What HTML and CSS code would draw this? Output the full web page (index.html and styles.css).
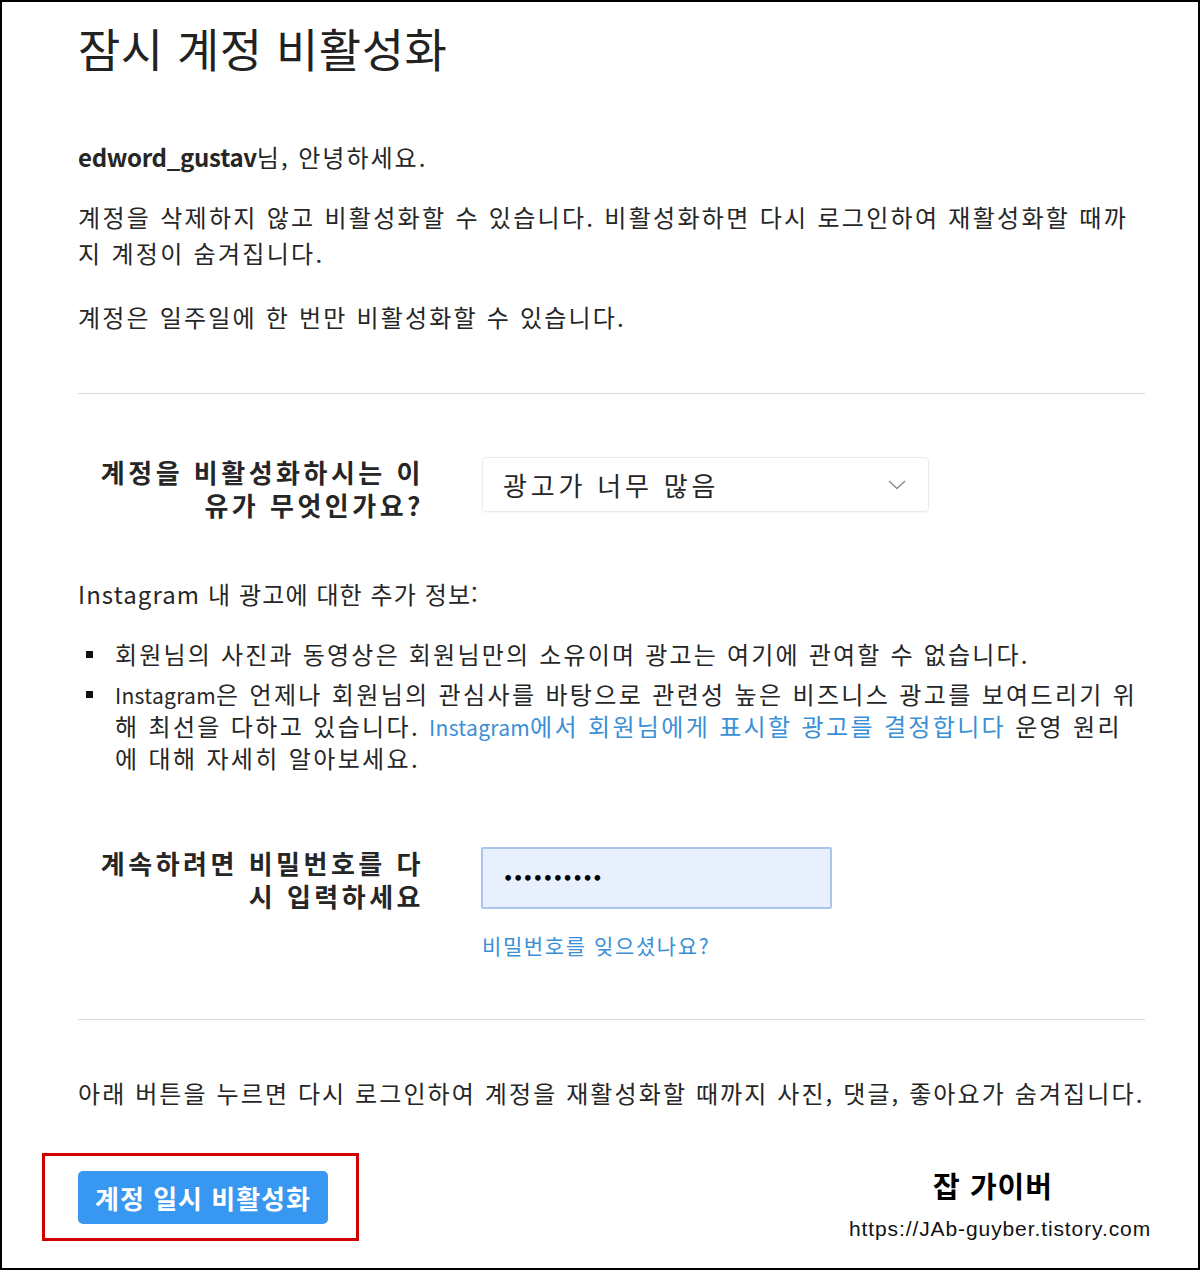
FILE: index.html
```html
<!DOCTYPE html>
<html lang="ko">

<head>
    <meta charset="UTF-8">
    <meta name="viewport" content="width=device-width, initial-scale=1.0">
    <title>잠시 계정 비활성화</title>
    <link rel="stylesheet" href="styles.css">
</head>

<body>
    <div class="page">
        <h1 class="title">잠시 계정 비활성화</h1>

        <p class="greeting"><b class="username">edword_gustav</b>님, 안녕하세요.</p>
        <p class="text first">계정을 삭제하지 않고 비활성화할 수 있습니다. 비활성화하면 다시 로그인하여 재활성화할 때까지 계정이 숨겨집니다.</p>
        <p class="text second">계정은 일주일에 한 번만 비활성화할 수 있습니다.</p>

        <hr class="divider">

        <div class="field reason">
            <label class="field-label" for="reason">계정을 비활성화하시는 이유가 무엇인가요?</label>
            <div class="field-body">
                <div class="select" id="reason">
                    <span>광고가 너무 많음</span>
                    <svg class="chevron" width="18" height="10" viewBox="0 0 18 10">
                        <path d="M1 1 L9 8.5 L17 1" fill="none" stroke="#8e8e8e" stroke-width="1.6" />
                    </svg>
                </div>
            </div>
        </div>

        <p class="text info">Instagram 내 광고에 대한 추가 정보:</p>
        <ul class="info-list">
            <li>회원님의 사진과 동영상은 회원님만의 소유이며 광고는 여기에 관여할 수 없습니다.</li>
            <li class="long"><span class="latin">Instagram</span>은 언제나 회원님의 관심사를 바탕으로 관련성 높은 비즈니스 광고를 보여드리기 위해 최선을 다하고 있습니다. <a href="#" class="link"><span class="latin">Instagram</span>에서 회원님에게 표시할 광고를 결정합니다</a> 운영 원리에 대해 자세히 알아보세요.</li>
        </ul>

        <div class="field password">
            <label class="field-label" for="pass">계속하려면 비밀번호를 다시 입력하세요</label>
            <div class="field-body">
                <div class="pass-input" id="pass">••••••••••</div>
                <a href="#" class="forgot">비밀번호를 잊으셨나요?</a>
            </div>
        </div>

        <hr class="divider bottom">

        <p class="text notice">아래 버튼을 누르면 다시 로그인하여 계정을 재활성화할 때까지 사진, 댓글, 좋아요가 숨겨집니다.</p>

        <div class="footer">
            <div class="highlight">
                <button class="btn">계정 일시 비활성화</button>
            </div>
            <div class="watermark">
                <div class="wm-name">잡 가이버</div>
                <div class="wm-url">https://JAb-guyber.tistory.com</div>
            </div>
        </div>
    </div>
</body>

</html>
```

FILE: styles.css
```css
body {
    margin: 0;
    background-color: #fff;
    font-family: "Noto Sans CJK KR", "Noto Sans", sans-serif;
    color: #262626;
}

.page {
    width: 1200px;
    height: 1270px;
    box-sizing: border-box;
    border: 2px solid #000;
    padding: 17px 53px 0 76px;
    overflow: hidden;
}

.title {
    margin: 0;
    font-size: 46px;
    line-height: 56px;
    font-weight: 400;
    letter-spacing: 0.5px;
    color: #222;
}

.text,
.greeting {
    margin: 0;
    font-size: 24px;
    line-height: 36px;
    letter-spacing: 2.3px;
    word-break: break-all;
}

.greeting {
    margin-top: 64px;
    letter-spacing: 2px;
}

.username {
    font-weight: 700;
    letter-spacing: -0.3px;
}

.text.first {
    margin-top: 24px;
}

.text.second {
    margin-top: 28px;
    letter-spacing: 2.2px;
}

.divider {
    margin: 58px 0 0;
    border: none;
    border-top: 1px solid #dbdbdb;
}

.field {
    display: flex;
    align-items: flex-start;
}

.field-label {
    width: 346px;
    box-sizing: border-box;
    padding-left: 10px;
    text-align: right;
    font-size: 26px;
    line-height: 33px;
    font-weight: 700;
    letter-spacing: 3.5px;
    color: #262626;
    word-break: break-all;
}

.field-body {
    margin-left: 58px;
    display: flex;
    flex-direction: column;
}

.reason {
    margin-top: 61px;
}

.select {
    margin-top: 2px;
    width: 447px;
    height: 55px;
    box-sizing: border-box;
    border: 1px solid #ebebeb;
    border-radius: 4px;
    box-shadow: 0 1px 2px rgba(0, 0, 0, 0.04);
    display: flex;
    align-items: center;
    justify-content: space-between;
    padding: 0 22px 0 20px;
    font-size: 26px;
    letter-spacing: 3.8px;
}

.chevron {
    display: block;
}

.text.info {
    margin-top: 57px;
    line-height: 32px;
    letter-spacing: 1.1px;
}

.info-list {
    list-style: none;
    margin: 28px 0 0;
    padding: 0;
}

.info-list li {
    position: relative;
    padding-left: 37px;
    font-size: 24px;
    line-height: 32px;
    letter-spacing: 2.2px;
    word-break: break-all;
}

.info-list li.long {
    letter-spacing: 2.35px;
}

.info-list li + li {
    margin-top: 8px;
}

.info-list li::before {
    content: "";
    position: absolute;
    left: 8px;
    top: 13px;
    width: 7px;
    height: 7px;
    background-color: #111;
}

.latin {
    font-size: 21px;
    line-height: 1;
    letter-spacing: 0.3px;
}

.link {
    color: #3a8fd6;
    text-decoration: none;
}

.password {
    margin-top: 72px;
}

.pass-input {
    margin-top: 1px;
    margin-left: -1px;
    width: 351px;
    height: 62px;
    box-sizing: border-box;
    border: 2px solid #a9c6ee;
    border-radius: 2px;
    background-color: #e8f0fe;
    padding-left: 20px;
    display: flex;
    align-items: center;
    font-family: "DejaVu Sans", sans-serif;
    font-size: 16px;
    font-weight: 700;
    letter-spacing: -0.3px;
    color: #000;
}

.forgot {
    margin-top: 24px;
    font-size: 21px;
    line-height: 24px;
    letter-spacing: 1.6px;
    color: #3a8fd6;
    text-decoration: none;
}

.divider.bottom {
    margin-top: 62px;
}

.text.notice {
    margin-top: 55px;
    letter-spacing: 2.1px;
}

.footer {
    margin-top: 42px;
    display: flex;
    justify-content: space-between;
    align-items: flex-start;
}

.highlight {
    margin-left: -36px;
    border: 3px solid #d10000;
    padding: 15px 28px 14px 33px;
}

.btn {
    display: block;
    width: 250px;
    height: 53px;
    border: none;
    border-radius: 5px;
    background-color: #3897f0;
    color: #fff;
    font-family: "Noto Sans CJK KR", sans-serif;
    font-size: 26px;
    font-weight: 700;
    letter-spacing: 1px;
    cursor: pointer;
}

.watermark {
    margin-right: -10px;
    margin-top: 14px;
    width: 310px;
    display: flex;
    flex-direction: column;
    align-items: center;
}

.wm-name {
    font-size: 29px;
    line-height: 36px;
    font-weight: 700;
    letter-spacing: 1px;
    color: #000;
    margin-right: 14px;
}

.wm-url {
    margin-top: 14px;
    font-family: "Liberation Sans", Arial, sans-serif;
    font-size: 21px;
    line-height: 24px;
    letter-spacing: 0.9px;
    white-space: nowrap;
    color: #111;
}
```
